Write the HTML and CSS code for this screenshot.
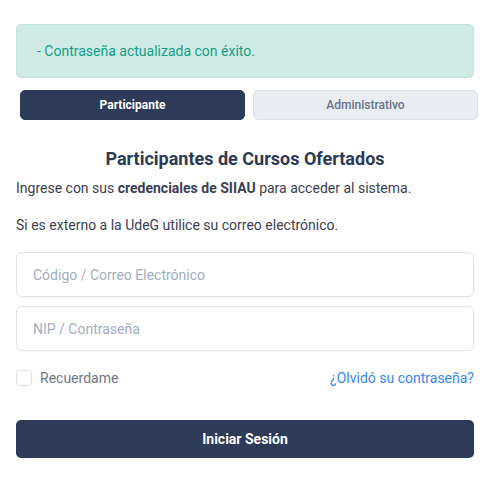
FILE: index.html
```html
<!DOCTYPE html>
<html lang="es">
<head>
<meta charset="utf-8">
<link rel="stylesheet" href="styles.css">
</head>
<body>
<div class="page">
  <div class="alert">- Contraseña actualizada con éxito.</div>
  <div class="tabs">
    <button class="tab tab-active">Participante</button>
    <button class="tab tab-inactive">Administrativo</button>
  </div>
  <h1 class="title">Participantes de Cursos Ofertados</h1>
  <p class="text">Ingrese con sus <strong>credenciales de SIIAU</strong> para acceder al sistema.</p>
  <p class="text">Si es externo a la UdeG utilice su correo electrónico.</p>
  <div class="fields">
    <input class="field" type="text" placeholder="Código / Correo Electrónico">
    <input class="field" type="password" placeholder="NIP / Contraseña">
  </div>
  <div class="options">
    <label class="remember"><span class="check"></span>Recuerdame</label>
    <a class="forgot" href="#">¿Olvidó su contraseña?</a>
  </div>
  <button class="submit">Iniciar Sesión</button>
</div>
</body>
</html>
```
FILE: styles.css
```css
* { box-sizing: border-box; }
html, body { margin: 0; background: #fff; }
body { font-family: Roboto, "Liberation Sans", sans-serif; }
.page {
  padding: 24px 14px 0 16px;
  display: flex;
  flex-direction: column;
}
.alert {
  height: 54px;
  background: #d0eae5;
  border: 1px solid #c3e3dc;
  border-radius: 5px;
  color: #12a085;
  font-size: 14px;
  display: flex;
  align-items: center;
  padding-left: 20px;
}
.tabs {
  margin: 12px -4px 0 4px;
  display: flex;
  gap: 8px;
}
.tab {
  flex: 1;
  height: 30px;
  border-radius: 5px;
  font-family: inherit;
  font-size: 12px;
  font-weight: 700;
  cursor: pointer;
}
.tab-active {
  background: #2d3a58;
  color: #fff;
  border: 1px solid #2d3a58;
}
.tab-inactive {
  background: #e9edf2;
  color: #6b7385;
  border: 1px solid #dde2ea;
  font-weight: 500;
}
.title {
  margin: 28px 0 0;
  text-align: center;
  font-size: 18px;
  font-weight: 700;
  color: #2d3a55;
  line-height: 22px;
}
.text {
  margin: 8px 0 0;
  font-size: 14px;
  line-height: 20px;
  color: #3b4150;
}
.text + .text { margin-top: 17px; }
.fields {
  margin-top: 17px;
  display: flex;
  flex-direction: column;
  gap: 9px;
}
.field {
  height: 45px;
  width: 100%;
  border: 1px solid #dfe4ec;
  border-radius: 6px;
  padding: 0 16px;
  font-family: inherit;
  font-size: 14px;
  color: #333;
  box-shadow: 0 1px 2px rgba(0,0,0,0.03);
  outline: none;
}
.field::placeholder { color: #a3adbf; }
.options {
  margin-top: 19px;
  display: flex;
  justify-content: space-between;
  align-items: center;
  height: 16px;
}
.remember {
  display: flex;
  align-items: center;
  gap: 8px;
  font-size: 14px;
  color: #6f7888;
}
.check {
  width: 16px;
  height: 16px;
  border: 1px solid #d9dfe8;
  border-radius: 4px;
  background: #fff;
}
.forgot {
  font-size: 14px;
  color: #3b87f0;
  text-decoration: none;
}
.submit {
  margin-top: 34px;
  height: 38px;
  width: 100%;
  background: #2d3a58;
  color: #fff;
  border: none;
  border-radius: 5px;
  font-family: inherit;
  font-size: 14px;
  font-weight: 700;
}
```
